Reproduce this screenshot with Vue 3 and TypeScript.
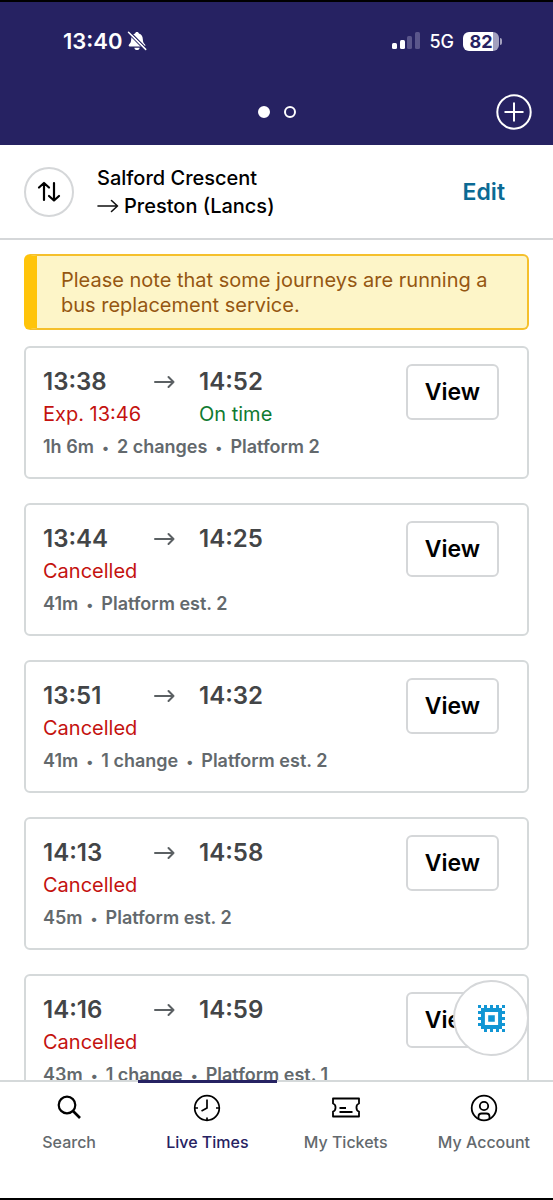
<script setup lang="ts">
interface Journey {
  departs: string
  arrives: string
  departStatus: string
  arriveStatus?: string
  details: string[]
}

const journeys: Journey[] = [
  { departs: '13:38', arrives: '14:52', departStatus: 'Exp. 13:46', arriveStatus: 'On time', details: ['1h 6m', '2 changes', 'Platform 2'] },
  { departs: '13:44', arrives: '14:25', departStatus: 'Cancelled', details: ['41m', 'Platform est. 2'] },
  { departs: '13:51', arrives: '14:32', departStatus: 'Cancelled', details: ['41m', '1 change', 'Platform est. 2'] },
  { departs: '14:13', arrives: '14:58', departStatus: 'Cancelled', details: ['45m', 'Platform est. 2'] },
  { departs: '14:16', arrives: '14:59', departStatus: 'Cancelled', details: ['43m', '1 change', 'Platform est. 1'] },
]
</script>

<template>
  <div class="screen">
    <header class="top">
      <div class="status">
        <div class="clock">
          <span>13:40</span>
          <svg width="20" height="20" viewBox="0 0 20 20" aria-hidden="true">
            <path d="M10 1C8.900 1 8.200 1.700 8.100 2.600C5.600 3.400 4.300 5.500 4.200 8C4.100 11.300 3.400 12.200 2 13.600C1.300 14.500 1.600 15.500 2.800 15.500H17.200C18.400 15.500 18.700 14.500 18 13.600C16.600 12.200 15.900 11.300 15.800 8C15.700 5.500 14.400 3.400 11.900 2.600C11.800 1.700 11.100 1 10 1Z" fill="#fff" />
            <path d="M7.300 16.700H12.700C12.500 18.200 11.400 19 10 19S7.500 18.200 7.300 16.700Z" fill="#fff" />
            <path d="M2.600 .5L19.600 17.500" stroke="#262262" stroke-width="1.300" />
            <path d="M.4 1.500L17.900 19" stroke="#262262" stroke-width="1.300" />
            <path d="M1.500 1.200L18.700 18.400" stroke="#fff" stroke-width="1.500" stroke-linecap="round" />
          </svg>
        </div>
        <div class="signals">
          <svg width="28" height="18" viewBox="0 0 28 18" aria-hidden="true">
            <rect x="0" y="11" width="5" height="6" rx="1.500" fill="#fff" />
            <rect x="8" y="8" width="5" height="9" rx="1.500" fill="#fff" />
            <rect x="15" y="4" width="5" height="13" rx="1.500" fill="#5a568b" />
            <rect x="23" y="0" width="5" height="17" rx="1.500" fill="#5a568b" />
          </svg>
          <span class="network">5G</span>
          <span class="battery"><span class="charge">82</span></span>
        </div>
      </div>
      <div class="pager">
        <span class="dots"><i class="dot on"></i><i class="dot"></i></span>
        <button class="add" type="button" aria-label="Add journey">
          <svg width="36" height="36" viewBox="0 0 36 36" fill="none" stroke="#fff" stroke-width="2" aria-hidden="true">
            <circle cx="18" cy="18" r="16.700" />
            <path d="M18 8.500V27.500M8.500 18H27.500" />
          </svg>
        </button>
      </div>
    </header>

    <section class="route">
      <button class="swap" type="button" aria-label="Swap stations">
        <svg width="24" height="24" viewBox="0 0 24 24" fill="none" stroke="#000" stroke-width="2.200" stroke-linecap="round" stroke-linejoin="round" aria-hidden="true">
          <path d="M7 20V3M2 7.500L7 3L12 7.500M17 3V20.500M12 16L17 20.500L22 16" />
        </svg>
      </button>
      <h1 class="stations">
        <span>Salford Crescent</span>
        <span class="to">
          <svg width="22" height="14" viewBox="0 0 22 14" fill="none" stroke="#111" stroke-width="1.600" stroke-linecap="round" stroke-linejoin="round" aria-hidden="true">
            <path d="M1 7H20.500M14.500 1.500L20.500 7L14.500 12.500" />
          </svg>
          Preston (Lancs)
        </span>
      </h1>
      <button class="edit" type="button">Edit</button>
    </section>

    <main class="board">
      <p class="notice">Please note that some journeys are running a bus replacement service.</p>
      <article v-for="j in journeys" :key="j.departs" class="card">
        <div class="info">
          <div class="times">
            <time class="time">{{ j.departs }}</time>
            <svg class="arrow" width="22" height="14" viewBox="0 0 22 14" fill="none" stroke="#5b6063" stroke-width="2" stroke-linecap="round" stroke-linejoin="round" aria-hidden="true">
              <path d="M2 7H20.500M15.500 2L20.500 7L15.500 12" />
            </svg>
            <time class="time">{{ j.arrives }}</time>
            <span class="state late">{{ j.departStatus }}</span>
            <span v-if="j.arriveStatus" class="state good">{{ j.arriveStatus }}</span>
          </div>
          <ul class="details">
            <li v-for="d in j.details" :key="d">{{ d }}</li>
          </ul>
        </div>
        <button class="view" type="button">View</button>
      </article>
      <button class="chip" type="button" aria-label="Open assistant">
        <svg width="27" height="27" viewBox="0 0 9 9" fill="#1296d4" aria-hidden="true">
          <path fill-rule="evenodd" d="M1 1H8V8H1ZM2.300 2.300V6.700H6.700V2.300Z" />
          <path d="M3.400 3.400H5.600V5.600H3.400ZM0 0H1V1H0ZM2 0H3V1H2ZM4 0H5V1H4ZM6 0H7V1H6ZM8 0H9V1H8ZM8 2H9V3H8ZM8 4H9V5H8ZM8 6H9V7H8ZM8 8H9V9H8ZM0 2H1V3H0ZM0 4H1V5H0ZM0 6H1V7H0ZM2 8H3V9H2ZM4 8H5V9H4ZM6 8H7V9H6Z" />
        </svg>
      </button>
    </main>

    <nav class="tabs">
      <a class="tab" href="#search">
        <svg width="28" height="28" viewBox="0 0 28 28" fill="none" stroke="#000" stroke-width="2.200" aria-hidden="true">
          <circle cx="12" cy="11" r="8.300" />
          <path d="M18 17L25 24" stroke-width="2.600" />
        </svg>
        Search
      </a>
      <a class="tab current" href="#live" aria-current="page">
        <svg width="28" height="28" viewBox="0 0 28 28" fill="none" stroke="#000" stroke-width="1.700" aria-hidden="true">
          <circle cx="14" cy="14" r="12.300" />
          <path d="M14 5.500V14L8.500 17M2 14H5M23 14H26M14 23.500V26.500" />
        </svg>
        Live Times
      </a>
      <a class="tab" href="#tickets">
        <svg width="28" height="28" viewBox="0 0 28 28" fill="none" stroke="#000" stroke-width="1.800" stroke-linejoin="round" aria-hidden="true">
          <path d="M1 4.500H27V9.500C23.600 10.500 23.600 16.500 27 17.500V22.500H1V17.500C4.400 16.500 4.400 10.500 1 9.500ZM7.500 14H14M7.500 18H20.500" />
        </svg>
        My Tickets
      </a>
      <a class="tab" href="#account">
        <svg width="28" height="28" viewBox="0 0 28 28" fill="none" stroke="#000" stroke-width="1.800" aria-hidden="true">
          <circle cx="14" cy="14" r="12.300" />
          <circle cx="14" cy="12" r="4.200" />
          <path d="M8.500 25V22.500C8.500 20.500 9.500 19.500 11.500 19.500H16.500C18.500 19.500 19.500 20.500 19.500 22.500V25" />
        </svg>
        My Account
      </a>
    </nav>
  </div>
</template>

<style>
body {
  margin: 0;
  background: #fff;
}
</style>

<style scoped>
.screen {
  box-sizing: border-box;
  display: flex;
  flex-direction: column;
  height: 100vh;
  border-top: 2px solid #000;
  border-bottom: 2px solid #000;
  background: #fff;
  color: #000;
  font-family: Inter, "Liberation Sans", sans-serif;
}
button {
  padding: 0;
  border: 0;
  background: none;
  color: inherit;
  font: inherit;
  cursor: pointer;
}
svg {
  display: block;
  flex: none;
}
.top {
  flex: none;
  background: #262262;
  color: #fff;
}
.status {
  display: flex;
  justify-content: space-between;
  align-items: center;
  height: 40px;
  padding: 19px 54px 0 63px;
}
.clock {
  display: flex;
  align-items: center;
  gap: 5px;
  font-size: 22px;
  font-weight: 600;
}
.signals {
  display: flex;
  align-items: center;
  gap: 9px;
}
.network {
  font-size: 18px;
  font-weight: 500;
}
.battery {
  position: relative;
  box-sizing: border-box;
  width: 36px;
  height: 19px;
  border-radius: 6px;
  background: linear-gradient(to right, #fff 30px, #a3a1be 30px);
  color: #262262;
  font-size: 18px;
  font-weight: 700;
  line-height: 19px;
  text-align: center;
}
.battery::after {
  content: "";
  position: absolute;
  left: 37px;
  top: 6px;
  width: 2px;
  height: 7px;
  border-radius: 0 3px 3px 0;
  background: #a3a1be;
}
.pager {
  display: grid;
  grid-template-columns: 1fr auto 1fr;
  align-items: center;
  padding: 33px 21px 15px;
}
.dots {
  grid-column: 2;
  display: flex;
  gap: 14px;
}
.dot {
  box-sizing: border-box;
  width: 12px;
  height: 12px;
  border: 2px solid #fff;
  border-radius: 50%;
}
.dot.on {
  background: #fff;
}
.add {
  justify-self: end;
}
.route {
  flex: none;
  display: flex;
  align-items: center;
  padding: 19px 48px 18px 24px;
  border-bottom: 2px solid #d5d7d9;
}
.swap {
  display: grid;
  place-items: center;
  box-sizing: border-box;
  width: 50px;
  height: 50px;
  border: 2px solid #d5d7d9;
  border-radius: 50%;
}
.stations {
  flex: 1;
  margin: 0 0 0 23px;
  font-size: 20px;
  font-weight: 500;
  line-height: 28px;
}
.stations span {
  display: block;
}
.stations .to {
  display: flex;
  align-items: center;
  gap: 5px;
}
.edit {
  color: #0b6a94;
  font-size: 23px;
  font-weight: 600;
}
.board {
  position: relative;
  flex: 1;
  min-height: 0;
  overflow: hidden;
  padding: 14px 24px 0;
}
.notice {
  margin: 0 0 16px;
  padding: 12px 24px 10px 24px;
  border: 2px solid #f5c02c;
  border-left: 13px solid #ffc40a;
  border-radius: 6px;
  background: #fdf5c8;
  color: #955712;
  font-size: 20px;
  line-height: 25px;
}
.card {
  display: flex;
  justify-content: space-between;
  align-items: flex-start;
  margin-bottom: 24px;
  padding: 16px 28px 16px 17px;
  border: 2px solid #d5d9da;
  border-radius: 6px;
}
.times {
  display: grid;
  grid-template-columns: 110px 46px auto;
  align-items: center;
  justify-content: start;
}
.time {
  color: #434547;
  font-size: 24px;
  font-weight: 600;
  line-height: 36px;
}
.state {
  font-size: 20px;
  line-height: 28px;
}
.late {
  grid-column: 1;
  color: #c4120f;
}
.good {
  grid-column: 3;
  color: #0f7a31;
}
.details {
  display: flex;
  margin: 5px 0 0;
  padding: 0;
  list-style: none;
  color: #63696d;
  font-size: 18px;
  font-weight: 600;
  line-height: 27px;
}
.details li + li::before {
  content: "•";
  margin: 0 8px;
  font-size: 14px;
}
.view {
  box-sizing: border-box;
  width: 93px;
  height: 56px;
  border: 2px solid #d5d7d9;
  border-radius: 6px;
  font-size: 23px;
  font-weight: 600;
}
.chip {
  position: absolute;
  right: 24px;
  bottom: 24px;
  display: grid;
  place-items: center;
  box-sizing: border-box;
  width: 76px;
  height: 76px;
  border: 2px solid #d5d7d9;
  border-radius: 50%;
  background: #fff;
}
.tabs {
  flex: none;
  display: grid;
  grid-template-columns: repeat(4, 1fr);
  border-top: 2px solid #d5d9da;
}
.tab {
  display: flex;
  flex-direction: column;
  align-items: center;
  gap: 10px;
  margin-top: -2px;
  padding: 11px 0 46px;
  border-top: 3px solid transparent;
  color: #63696d;
  font-size: 16px;
  font-weight: 500;
  line-height: 20px;
  text-decoration: none;
}
.tab.current {
  border-top-color: #262262;
  color: #262262;
}
</style>
